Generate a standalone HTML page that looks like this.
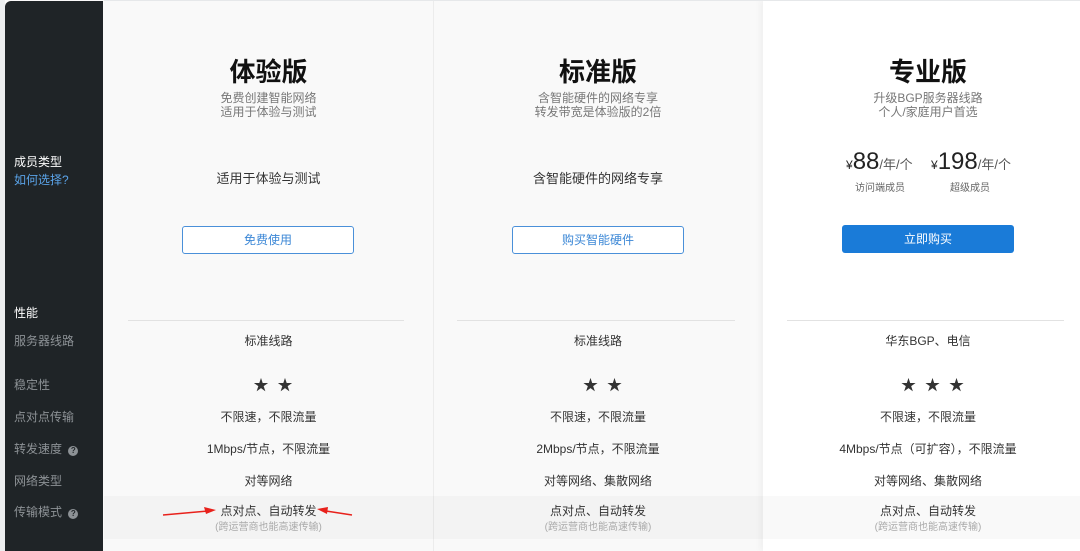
<!DOCTYPE html>
<html><head><meta charset="utf-8"><style>
*{margin:0;padding:0;box-sizing:border-box}
body{width:1080px;height:551px;overflow:hidden;background:#f9f9f9;position:relative;font-family:"Liberation Sans","Noto Sans CJK SC",sans-serif;color:#333}
.a{position:absolute}
.c{position:absolute;text-align:center;white-space:nowrap}
.side{left:5px;top:1px;width:98px;height:550px;background:#1f2427;border-radius:6px 0 0 0}
.sl{position:absolute;left:14px;font-size:12px;color:#8d9296}
.t{font-size:26px;font-weight:bold;color:#111}
.sub{font-size:12px;color:#777;line-height:14px}
.r{font-size:12px;color:#333}
.star{font-size:15px;color:#333;letter-spacing:9px}
</style></head><body>
<div class="a" style="left:0;top:0;width:5px;height:551px;background:#eceeef"></div>
<div class="a" style="left:433px;top:0;width:1px;height:551px;background:#ececec"></div>
<div class="a" style="left:763px;top:0;width:317px;height:551px;background:#fff;box-shadow:-3px 0 6px rgba(0,0,0,0.04)"></div>
<div class="a" style="left:104px;top:0;width:976px;height:1px;background:#e6e8ea"></div>
<div class="a" style="left:104px;top:496px;width:976px;height:43px;background:rgba(0,0,0,0.025)"></div>
<div class="a side"></div>
<div class="sl" style="top:153px;color:#fff">成员类型</div>
<div class="sl" style="top:171px;color:#5aa3e8">如何选择?</div>
<div class="sl" style="top:304px;color:#fff">性能</div>
<div class="sl" style="top:332px">服务器线路</div>
<div class="sl" style="top:376px">稳定性</div>
<div class="sl" style="top:408px">点对点传输</div>
<div class="sl" style="top:440px">转发速度 <span style="display:inline-block;width:10px;height:10px;border-radius:5px;background:#8d9296;color:#1f2427;font-size:8px;line-height:10px;text-align:center;margin-left:3px;font-weight:bold">?</span></div>
<div class="sl" style="top:472px">网络类型</div>
<div class="sl" style="top:503px">传输模式 <span style="display:inline-block;width:10px;height:10px;border-radius:5px;background:#8d9296;color:#1f2427;font-size:8px;line-height:10px;text-align:center;margin-left:3px;font-weight:bold">?</span></div>

<!-- col1 -->
<div class="c t" style="left:104px;width:329px;top:52px">体验版</div>
<div class="c sub" style="left:104px;width:329px;top:91px">免费创建智能网络<br>适用于体验与测试</div>
<div class="c" style="left:104px;width:329px;top:168px;font-size:13px">适用于体验与测试</div>
<div class="a" style="left:182px;top:226px;width:172px;height:28px;border:1px solid #4a90d9;border-radius:3px;background:#fff;color:#3b87d6;font-size:12px;text-align:center;line-height:26px">免费使用</div>
<div class="a" style="left:128px;top:320px;width:276px;height:1px;background:#e2e2e2"></div>
<div class="c r" style="left:104px;width:329px;top:332px">标准线路</div>
<div class="c star" style="left:113px;width:329px;top:374px">★★</div>
<div class="c r" style="left:104px;width:329px;top:408px">不限速，不限流量</div>
<div class="c r" style="left:104px;width:329px;top:440px">1Mbps/节点，不限流量</div>
<div class="c r" style="left:104px;width:329px;top:472px">对等网络</div>
<div class="c r" style="left:104px;width:329px;top:502px">点对点、自动转发</div>
<div class="c" style="left:104px;width:329px;top:518px;font-size:10px;color:#aaa">(跨运营商也能高速传输)</div>
<svg class="a" style="left:160px;top:505px" width="200" height="14"><path d="M3 10 L48 6" stroke="#e8211b" stroke-width="1.5"/><path d="M56 5 L44 2 L46 9Z" fill="#e8211b"/><path d="M192 10 L166 6" stroke="#e8211b" stroke-width="1.5"/><path d="M157 4 L168 2 L167 9Z" fill="#e8211b"/></svg>

<!-- col2 -->
<div class="c t" style="left:433px;width:330px;top:52px">标准版</div>
<div class="c sub" style="left:433px;width:330px;top:91px">含智能硬件的网络专享<br>转发带宽是体验版的2倍</div>
<div class="c" style="left:433px;width:330px;top:168px;font-size:13px">含智能硬件的网络专享</div>
<div class="a" style="left:512px;top:226px;width:172px;height:28px;border:1px solid #4a90d9;border-radius:3px;background:#fff;color:#3b87d6;font-size:12px;text-align:center;line-height:26px">购买智能硬件</div>
<div class="a" style="left:457px;top:320px;width:278px;height:1px;background:#e2e2e2"></div>
<div class="c r" style="left:433px;width:330px;top:332px">标准线路</div>
<div class="c star" style="left:442px;width:330px;top:374px">★★</div>
<div class="c r" style="left:433px;width:330px;top:408px">不限速，不限流量</div>
<div class="c r" style="left:433px;width:330px;top:440px">2Mbps/节点，不限流量</div>
<div class="c r" style="left:433px;width:330px;top:472px">对等网络、集散网络</div>
<div class="c r" style="left:433px;width:330px;top:502px">点对点、自动转发</div>
<div class="c" style="left:433px;width:330px;top:518px;font-size:10px;color:#aaa">(跨运营商也能高速传输)</div>

<!-- col3 -->
<div class="c t" style="left:763px;width:330px;top:52px">专业版</div>
<div class="c sub" style="left:763px;width:330px;top:91px">升级BGP服务器线路<br>个人/家庭用户首选</div>
<div class="a" style="left:846px;top:148px;font-size:24px;color:#222;white-space:nowrap"><span style="font-size:12px">¥</span>88<span style="font-size:13px;color:#555">/年/个</span></div>
<div class="a" style="left:931px;top:148px;font-size:24px;color:#222;white-space:nowrap"><span style="font-size:12px">¥</span>198<span style="font-size:13px;color:#555">/年/个</span></div>
<div class="a" style="left:855px;top:179px;font-size:10px;color:#666">访问端成员</div>
<div class="a" style="left:950px;top:179px;font-size:10px;color:#666">超级成员</div>
<div class="a" style="left:842px;top:225px;width:172px;height:28px;border-radius:3px;background:#1a7bd8;color:#fff;font-size:12px;text-align:center;line-height:28px">立即购买</div>
<div class="a" style="left:787px;top:320px;width:277px;height:1px;background:#e2e2e2"></div>
<div class="c r" style="left:763px;width:330px;top:332px">华东BGP、电信</div>
<div class="c star" style="left:772px;width:330px;top:374px">★★★</div>
<div class="c r" style="left:763px;width:330px;top:408px">不限速，不限流量</div>
<div class="c r" style="left:763px;width:330px;top:440px">4Mbps/节点（可扩容），不限流量</div>
<div class="c r" style="left:763px;width:330px;top:472px">对等网络、集散网络</div>
<div class="c r" style="left:763px;width:330px;top:502px">点对点、自动转发</div>
<div class="c" style="left:763px;width:330px;top:518px;font-size:10px;color:#aaa">(跨运营商也能高速传输)</div>
</body></html>
